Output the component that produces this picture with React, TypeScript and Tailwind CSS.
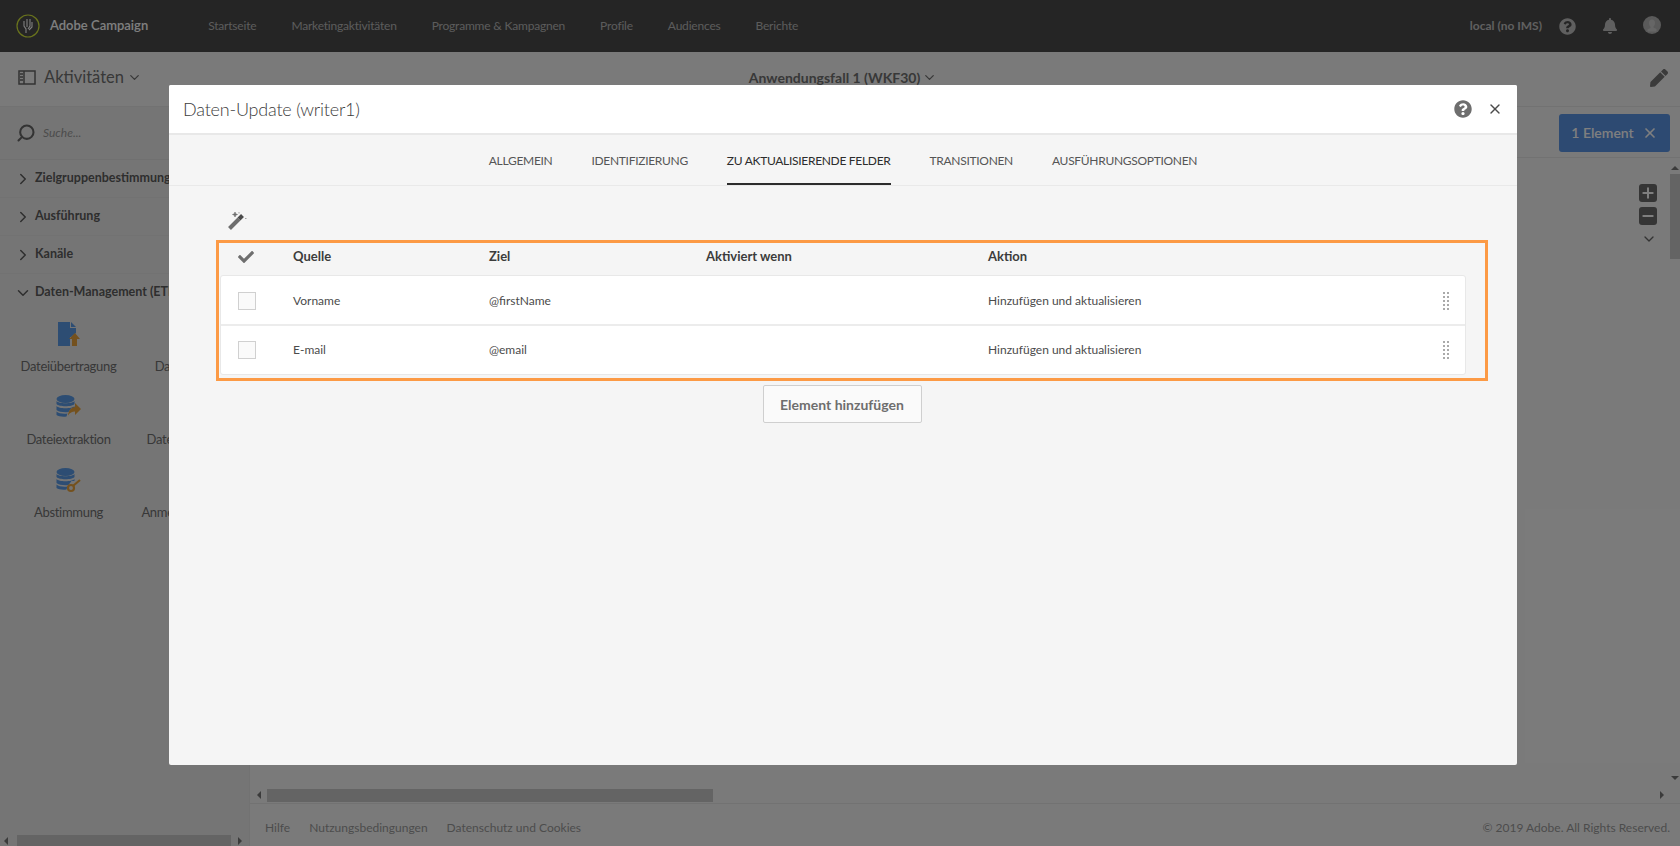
import { ChevronDown, ChevronRight, Plus, Minus, X, Search } from 'lucide-react';
import { FaBell, FaCheck, FaPen, FaQuestionCircle } from 'react-icons/fa';

const font = { fontFamily: 'Lato, "Noto Sans", sans-serif' };

const navItems = ['Startseite', 'Marketingaktivitäten', 'Programme & Kampagnen', 'Profile', 'Audiences', 'Berichte'];
const tabs = ['Allgemein', 'Identifizierung', 'Zu aktualisierende Felder', 'Transitionen', 'Ausführungsoptionen'];
const groups = ['Zielgruppenbestimmung', 'Ausführung', 'Kanäle'];

const rows = [
  { source: 'Vorname', target: '@firstName' },
  { source: 'E-mail', target: '@email' },
];

function Logo() {
  return (
    <svg width="24" height="24" viewBox="0 0 24 24" fill="none">
      <circle cx="12" cy="12" r="11" stroke="#d2e639" strokeWidth="1.2" />
      <path d="M8 7v5l2 3v4M11 5v8M14 5v7l-2 3M16 8v5l-3 3" stroke="#fff" strokeWidth="1.1" />
    </svg>
  );
}

function Wand() {
  return (
    <svg width="19" height="19" viewBox="0 0 19 19" fill="none">
      <path d="M1.500 17.500L11 8" stroke="#6e6e6e" strokeWidth="4" />
      <path d="M11 8l3.500-3.500" stroke="#4b4b4b" strokeWidth="4" />
      <path d="M7 1l.7 1.800L9.500 3.500 7.700 4.200 7 6l-.7-1.800L4.500 3.500l1.800-.7zM17 7.500h1.500M11 1v1.500" fill="#6e6e6e" stroke="#6e6e6e" strokeWidth="0.6" />
    </svg>
  );
}

function FileIcon() {
  return (
    <svg width="22" height="25" viewBox="0 0 22 25">
      <path d="M0 0h12v6h6v5l-5 4h-1v9H0z" fill="#5a9be6" />
      <path d="M13 0l5 5h-5z" fill="#5a9be6" />
      <path d="M17 11l5 6h-3v7h-5v-7h-3z" fill="#e8a33d" />
    </svg>
  );
}

function DbIcon({ kind }: { kind: 'arrow' | 'key' }) {
  return (
    <svg width="26" height="25" viewBox="0 0 26 25">
      <ellipse cx="9.500" cy="4" rx="9" ry="4" fill="#5a9be6" />
      <path d="M.5 6c2 3 16 3 18 0v3c-2 3-16 3-18 0z" fill="#5a9be6" />
      <path d="M.5 11c2 3 16 3 18 0v2h-3l-3 4c-4 .5-10 0-12-2z" fill="#5a9be6" />
      <path d="M.5 16.500c2 2 7 2.500 11 2l-1 3c-4 .5-8 0-10-1.500z" fill="#5a9be6" />
      {kind === 'arrow' ? (
        <path d="M19 8l6 6-6 6v-3.500c-3 0-5 1-7 4 .5-5 3-8 7-8.500z" fill="#e8a33d" />
      ) : (
        <g fill="none" stroke="#e8a33d" strokeWidth="2.200">
          <circle cx="15" cy="20" r="3" />
          <path d="M17.500 17.500L24 12" />
        </g>
      )}
    </svg>
  );
}

function Activity({ label, icon }: { label: string; icon?: React.ReactNode }) {
  return (
    <div className="flex h-[73px] flex-col items-center">
      <div className="flex h-[25px] items-center justify-center">{icon}</div>
      <span className="mt-[10px] whitespace-nowrap text-[13px] tracking-[-0.3px] text-[#707070]">{label}</span>
    </div>
  );
}

function Triangle({ dir }: { dir: 'up' | 'down' | 'left' | 'right' }) {
  const cls = {
    up: 'border-x-[4px] border-b-[4px] border-x-transparent border-b-[#777]',
    down: 'border-x-[4px] border-t-[4px] border-x-transparent border-t-[#777]',
    left: 'border-y-[4px] border-r-[4px] border-y-transparent border-r-[#777]',
    right: 'border-y-[4px] border-l-[4px] border-y-transparent border-l-[#777]',
  }[dir];
  return <span className={`block h-0 w-0 shrink-0 ${cls}`} />;
}

function DragHandle() {
  return (
    <div className="grid grid-cols-2 gap-x-[2px] gap-y-[2px]">
      {Array.from({ length: 10 }).map((_, i) => (
        <span key={i} className="h-[2px] w-[2px] bg-[#aaa]" />
      ))}
    </div>
  );
}

export default function App() {
  return (
    <div className="relative flex h-screen flex-col overflow-hidden bg-[#f5f5f5]" style={font}>
      {/* Top bar */}
      <header className="flex h-[52px] shrink-0 items-center bg-[#4b4b4b] text-white">
        <div className="ml-[16px]"><Logo /></div>
        <span className="ml-[10px] text-[13px] font-semibold">Adobe Campaign</span>
        <nav className="ml-[60px] flex gap-[35px] text-[12px] tracking-[-0.2px] text-[#b8b8b8]">
          {navItems.map((n) => <span key={n}>{n}</span>)}
        </nav>
        <div className="ml-auto mr-[19px] flex items-center">
          <span className="text-[12px] font-bold text-[#c0c0c0]">local (no IMS)</span>
          <FaQuestionCircle className="ml-[17px] text-[#c0c0c0]" size={17} />
          <FaBell className="ml-[26px] text-[#c0c0c0]" size={16} />
          <svg className="ml-[25px] -translate-y-[1px]" width="18" height="18" viewBox="0 0 18 18">
            <circle cx="9" cy="9" r="9" fill="#b4b4b4" />
            <path d="M9 3.500c2 0 3 1.500 3 3.500s-1 3-1.500 3.500v1l3 1.500v2.500h-9V13.500l3-1.500v-1C7 10 6 9 6 7s1-3.500 3-3.500z" fill="#cdcdcd" />
          </svg>
        </div>
      </header>

      {/* Sub header */}
      <div className="flex h-[55px] shrink-0 items-center border-b border-[#e4e4e4] bg-[#f5f5f5] pb-[3px] text-[#707070]">
        <div className="flex flex-1 items-center pl-[18px]">
          <svg width="18" height="15" viewBox="0 0 18 15" fill="none" stroke="#666" strokeWidth="1.500">
            <rect x="1" y="1" width="16" height="13" />
            <path d="M6 1v13" />
            <path d="M2 4h3M2 7h3M2 10h3" />
          </svg>
          <span className="ml-[8px] text-[16.500px]">Aktivitäten</span>
          <ChevronDown className="ml-[3px]" size={15} />
        </div>
        <div className="flex items-center text-[14px] font-bold">
          Anwendungsfall 1 (WKF30)
          <ChevronDown className="ml-[2px]" size={15} />
        </div>
        <div className="flex flex-1 justify-end pr-[12px]">
          <FaPen className="text-[#777]" size={18} />
        </div>
      </div>

      <div className="flex min-h-0 flex-1">
        {/* Activities panel */}
        <aside className="flex w-[250px] shrink-0 flex-col border-r border-[#e4e4e4] bg-[#ebebeb]">
          <div className="flex h-[53px] shrink-0 items-center border-b border-[#e0e0e0] pb-[1px] pl-[16px] text-[#666]">
            <Search className="-scale-x-100" size={20} strokeWidth={2.500} />
            <span className="ml-[7px] text-[12px] italic text-[#999]">Suche...</span>
          </div>
          {groups.map((g) => (
            <div key={g} className="flex h-[38px] shrink-0 items-center border-b border-[#e4e4e4] pl-[14px] text-[12.500px] font-bold text-[#5c5c5c]">
              <ChevronRight size={18} strokeWidth={2} />
              <span className="ml-[3px] whitespace-nowrap">{g}</span>
            </div>
          ))}
          <div className="flex h-[37px] shrink-0 items-center pl-[14px] text-[12.500px] font-bold text-[#5c5c5c]">
            <ChevronDown size={18} strokeWidth={2} />
            <span className="ml-[3px] whitespace-nowrap">Daten-Management (ETL)</span>
          </div>
          <div className="mt-[11px] grid grid-cols-[117px_117px] pl-[10px]">
            <Activity label="Dateiübertragung" icon={<FileIcon />} />
            <Activity label="Datei laden" />
            <Activity label="Dateiextraktion" icon={<DbIcon kind="arrow" />} />
            <Activity label="Daten-Update" />
            <Activity label="Abstimmung" icon={<DbIcon kind="key" />} />
            <Activity label="Anmeldedienste" />
          </div>
          <div className="mt-auto flex h-[11px] items-center px-[4px]">
            <Triangle dir="left" />
            <div className="ml-[9px] h-full w-[214px] bg-[#c8c8c8]" />
            <div className="ml-[7px]"><Triangle dir="right" /></div>
          </div>
        </aside>

        <div className="flex min-w-0 flex-1 flex-col">
          {/* Toolbar */}
          <div className="flex h-[51px] shrink-0 items-center justify-end border-b border-[#e4e4e4] pr-[10px] pt-[1px]">
            <div className="flex h-[38px] w-[111px] items-center justify-center gap-[8px] rounded-[3px] bg-[#5a94e4] text-[14px] font-semibold text-white">
              1 Element
              <X size={16} strokeWidth={2.500} />
            </div>
          </div>

          {/* Canvas */}
          <div className="flex min-h-0 flex-1">
            <div className="flex flex-1 flex-col items-end pr-[13px] pt-[26px]">
              <div className="flex h-[18px] w-[18px] items-center justify-center rounded-[3px] bg-[#6b6b6b] text-white">
                <Plus size={16} strokeWidth={3} />
              </div>
              <div className="mt-[5px] flex h-[18px] w-[18px] items-center justify-center rounded-[3px] bg-[#6b6b6b] text-white">
                <Minus size={16} strokeWidth={3} />
              </div>
              <ChevronDown className="mt-[6px] text-[#666]" size={16} />
            </div>
            <div className="flex w-[10px] shrink-0 flex-col items-center pt-[8px]">
              <Triangle dir="up" />
              <div className="mt-[4px] h-[85px] w-full bg-[#c8c8c8]" />
              <div className="mb-[7px] mt-auto"><Triangle dir="down" /></div>
            </div>
          </div>
          <div className="flex h-[17px] shrink-0 items-center border-b border-[#e4e4e4]">
            <div className="ml-[7px]"><Triangle dir="left" /></div>
            <div className="ml-[6px] h-[13px] w-[446px] bg-[#c8c8c8]" />
            <div className="ml-auto mr-[16px]"><Triangle dir="right" /></div>
          </div>

          {/* Footer */}
          <footer className="flex h-[42px] shrink-0 items-center gap-[19px] pl-[15px] pr-[10px] pt-[6px] text-[12px] text-[#999]">
            <span>Hilfe</span>
            <span>Nutzungsbedingungen</span>
            <span>Datenschutz und Cookies</span>
            <span className="ml-auto">© 2019 Adobe. All Rights Reserved.</span>
          </footer>
        </div>
      </div>

      <div className="absolute inset-0 bg-black/50" />

      {/* Dialog */}
      <div className="absolute left-[169px] top-[85px] flex h-[680px] w-[1348px] flex-col rounded-[2px] bg-[#f5f5f5] text-[#4b4b4b]">
        <div className="flex h-[50px] shrink-0 items-center rounded-t-[2px] border-b-2 border-[#e8e8e8] bg-white pl-[14px] pr-[14px]">
          <h1 className="text-[18px] font-light tracking-[-0.2px] text-[#3c3c3c]">Daten-Update (writer1)</h1>
          <FaQuestionCircle className="ml-auto -translate-x-[2px] text-[#6e6e6e]" size={18} />
          <X className="ml-[13px] text-[#4b4b4b]" size={16} strokeWidth={2} />
        </div>

        <div className="flex h-[51px] shrink-0 justify-center gap-[39px] border-b border-[#e9e9e9]">
          {tabs.map((t, i) => (
            <div
              key={t}
              className={`flex items-center border-b-2 pt-[3px] text-[12px] uppercase tracking-[-0.3px] ${i === 2 ? 'border-[#2c2c2c] text-[#2c2c2c]' : 'border-transparent text-[#555]'}`}
            >
              {t}
            </div>
          ))}
        </div>

        <div className="flex flex-1 flex-col pl-[47px] pr-[29px]">
          <div className="flex h-[54px] shrink-0 items-end pb-[10px] pl-[12px]">
            <Wand />
          </div>

          <div className="border-[3px] border-[#fc9a45] pb-[3px] pl-[1px] pr-[19px]">
            <div className="grid h-[32px] grid-cols-[73px_196px_217px_282px_1fr] items-center pb-[4px] text-[13px] font-bold text-[#3c3c3c]">
              <FaCheck className="ml-[18px] text-[#6e6e6e]" size={16} />
              <span>Quelle</span>
              <span>Ziel</span>
              <span>Aktiviert wenn</span>
              <span>Aktion</span>
            </div>
            <div className="rounded-[3px] border border-[#e8e8e8] bg-white">
              {rows.map((r, i) => (
                <div
                  key={r.source}
                  className={`grid grid-cols-[72px_196px_217px_282px_1fr] items-center text-[12px] text-[#4b4b4b] ${i === 0 ? 'h-[50px] border-b-2 border-[#ececec] pt-[1px]' : 'h-[48px]'}`}
                >
                  <span className="ml-[17px] h-[18px] w-[18px] border border-[#d0d0d0] bg-[#fafafa]" />
                  <span>{r.source}</span>
                  <span>{r.target}</span>
                  <span />
                  <div className="flex items-center justify-between pr-[16px]">
                    <span>Hinzufügen und aktualisieren</span>
                    <DragHandle />
                  </div>
                </div>
              ))}
            </div>
          </div>

          <button className="mx-auto mt-[4px] h-[38px] w-[159px] translate-x-[-10px] rounded-[2px] border border-[#cfcfcf] bg-[#fafafa] text-[14px] font-bold text-[#6e6e6e]">
            Element hinzufügen
          </button>
        </div>
      </div>
    </div>
  );
}
